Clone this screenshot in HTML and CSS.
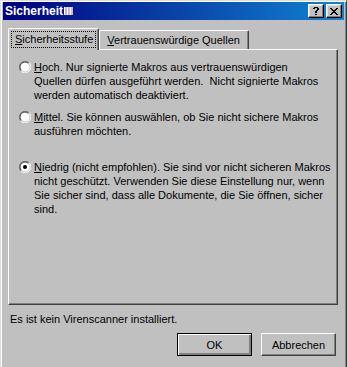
FILE: index.html
```html
<!DOCTYPE html>
<html lang="de">
<head>
<meta charset="utf-8">
<title>Sicherheit</title>
<link rel="stylesheet" href="styles.css">
</head>
<body>
<div class="window">
  <div class="titlebar">
    <span class="title">Sicherheit<span class="garble"></span></span>
    <div class="tbtns">
      <span class="tbtn"><svg width="6" height="8" viewBox="0 0 6 8" shape-rendering="crispEdges"><path d="M1 0h4v1H1zM0 1h2v1H0zM4 1h2v2H4zM3 3h2v1H3zM2 4h2v2H2zM2 7h2v1H2z" fill="#000"/></svg></span>
      <span class="tbtn"><svg width="8" height="7" viewBox="0 0 8 7" shape-rendering="crispEdges"><path d="M0 0h2v1H0zM6 0h2v1H6zM1 1h2v1H1zM5 1h2v1H5zM2 2h4v1H2zM3 3h2v1H3zM2 4h4v1H2zM1 5h2v1H1zM5 5h2v1H5zM0 6h2v1H0zM6 6h2v1H6z" fill="#000"/></svg></span>
    </div>
  </div>
  <div class="content">
    <div class="tabs">
      <div class="tab active"><span class="focus"><u>S</u>icherheitsstufe</span></div>
      <div class="tab"><u>V</u>ertrauenswürdige Quellen</div>
    </div>
    <div class="panel">
      <div class="option">
        <svg class="radio" width="12" height="12" viewBox="0 0 12 12"><circle cx="6" cy="6" r="5" fill="#fff"/><path d="M1.76 10.24A6 6 0 0 1 10.24 1.76" fill="none" stroke="#808080" stroke-width="1"/><path d="M10.24 1.76A6 6 0 0 1 1.76 10.24" fill="none" stroke="#fff" stroke-width="1"/><path d="M2.46 9.54A5 5 0 0 1 9.54 2.46" fill="none" stroke="#404040" stroke-width="1"/><path d="M9.54 2.46A5 5 0 0 1 2.46 9.54" fill="none" stroke="#d4d0c8" stroke-width="1"/></svg>
        <p><u>H</u>och. Nur signierte Makros aus vertrauenswürdigen<br>Quellen dürfen ausgeführt werden.&nbsp; Nicht signierte Makros<br>werden automatisch deaktiviert.</p>
      </div>
      <div class="option">
        <svg class="radio" width="12" height="12" viewBox="0 0 12 12"><circle cx="6" cy="6" r="5" fill="#fff"/><path d="M1.76 10.24A6 6 0 0 1 10.24 1.76" fill="none" stroke="#808080" stroke-width="1"/><path d="M10.24 1.76A6 6 0 0 1 1.76 10.24" fill="none" stroke="#fff" stroke-width="1"/><path d="M2.46 9.54A5 5 0 0 1 9.54 2.46" fill="none" stroke="#404040" stroke-width="1"/><path d="M9.54 2.46A5 5 0 0 1 2.46 9.54" fill="none" stroke="#d4d0c8" stroke-width="1"/></svg>
        <p><u>M</u>ittel. Sie können auswählen, ob Sie nicht sichere Makros<br>ausführen möchten.</p>
      </div>
      <div class="option">
        <svg class="radio" width="12" height="12" viewBox="0 0 12 12"><circle cx="6" cy="6" r="5" fill="#fff"/><path d="M1.76 10.24A6 6 0 0 1 10.24 1.76" fill="none" stroke="#808080" stroke-width="1"/><path d="M10.24 1.76A6 6 0 0 1 1.76 10.24" fill="none" stroke="#fff" stroke-width="1"/><path d="M2.46 9.54A5 5 0 0 1 9.54 2.46" fill="none" stroke="#404040" stroke-width="1"/><path d="M9.54 2.46A5 5 0 0 1 2.46 9.54" fill="none" stroke="#d4d0c8" stroke-width="1"/><circle cx="6" cy="6" r="2" fill="#000"/></svg>
        <p><u>N</u>iedrig (nicht empfohlen). Sie sind vor nicht sicheren Makros<br>nicht geschützt. Verwenden Sie diese Einstellung nur, wenn<br>Sie sicher sind, dass alle Dokumente, die Sie öffnen, sicher<br>sind.</p>
      </div>
    </div>
    <div class="status">Es ist kein Virenscanner installiert.</div>
    <div class="buttons">
      <button class="btn default">OK</button>
      <button class="btn">Abbrechen</button>
    </div>
  </div>
</div>
</body>
</html>
```
FILE: styles.css
```css
html, body {
  margin: 0;
  padding: 0;
  background: #c0c0c0;
}
body {
  width: 347px;
  height: 367px;
  overflow: hidden;
  font-family: "Liberation Sans", Arial, sans-serif;
  font-size: 11px;
  color: #000;
}
.window {
  box-sizing: border-box;
  width: 347px;
  height: 380px;
  background: #c0c0c0;
  border-left: 1px solid #dfdfdf;
  border-top: 1px solid #dfdfdf;
  border-right: 1px solid #404040;
  padding: 1px 1px 0 1px;
  box-shadow: inset 1px 1px 0 #fff, inset -1px 0 0 #808080;
}
.titlebar {
  margin: 0 1px 0 1px;
  height: 18px;
  background: linear-gradient(to right, #000080, #1084d0);
  display: flex;
  align-items: center;
  justify-content: space-between;
}
.title {
  color: #fff;
  font-weight: bold;
  font-size: 12px;
  padding-left: 2px;
  display: flex;
  align-items: center;
}
.garble {
  display: inline-block;
  width: 9px;
  height: 8px;
  margin-left: 1px;
  background: repeating-linear-gradient(to right, #fff 0 1px, #c8b4e6 1px 3px);
}
.tbtns {
  display: flex;
  gap: 2px;
  padding-right: 2px;
}
.tbtn {
  box-sizing: border-box;
  width: 16px;
  height: 14px;
  background: #c0c0c0;
  border-top: 1px solid #fff;
  border-left: 1px solid #fff;
  border-right: 1px solid #000;
  border-bottom: 1px solid #000;
  box-shadow: inset -1px -1px 0 #808080, inset 1px 1px 0 #dfdfdf;
  display: flex;
  align-items: center;
  justify-content: center;
}
.tbtn svg { display: block; }
.content {
  padding: 8px 6px 0 6px;
}
.tabs {
  display: flex;
  align-items: flex-end;
  height: 21px;
  position: relative;
  z-index: 1;
}
.tab {
  box-sizing: border-box;
  height: 19px;
  padding: 2px 8px 0 7px;
  border-top: 1px solid #fff;
  border-left: 1px solid #fff;
  border-right: 1px solid #404040;
  border-radius: 2px 2px 0 0;
  box-shadow: inset -1px 0 0 #808080;
  background: #c0c0c0;
  line-height: 14px;
  white-space: nowrap;
}
.tab.active {
  height: 22px;
  margin-bottom: -1px;
  padding: 3px 3px 0 3px;
}
.focus {
  display: inline-block;
  outline: 1px dotted #000;
  padding: 0 2px 1px 3px;
  line-height: 14px;
}
.panel {
  box-sizing: border-box;
  height: 256px;
  width: 330px;
  border-top: 1px solid #fff;
  border-left: 1px solid #fff;
  border-right: 1px solid #404040;
  border-bottom: 1px solid #404040;
  box-shadow: inset -1px -1px 0 #808080;
  padding: 10px 0 0 10px;
}
.option {
  display: flex;
  align-items: flex-start;
  height: 50px;
  gap: 3px;
}
.radio {
  flex: none;
  margin-top: 1px;
}
.option p {
  margin: 0;
  line-height: 14px;
  white-space: nowrap;
}
.status {
  margin-top: 7px;
  padding-left: 2px;
  line-height: 14px;
}
.buttons {
  display: flex;
  justify-content: flex-end;
  gap: 9px;
  margin-top: 7px;
  padding-right: 3px;
}
.btn {
  box-sizing: border-box;
  width: 75px;
  height: 23px;
  margin: 0;
  padding: 0;
  font-family: inherit;
  font-size: 11px;
  color: #000;
  background: #c0c0c0;
  border-top: 1px solid #fff;
  border-left: 1px solid #fff;
  border-right: 1px solid #404040;
  border-bottom: 1px solid #404040;
  box-shadow: inset -1px -1px 0 #808080;
  border-radius: 0;
}
.btn.default {
  border: 1px solid #000;
  box-shadow: inset 1px 1px 0 #fff, inset -2px -2px 0 #808080, inset -1px -1px 0 #404040;
}
```
